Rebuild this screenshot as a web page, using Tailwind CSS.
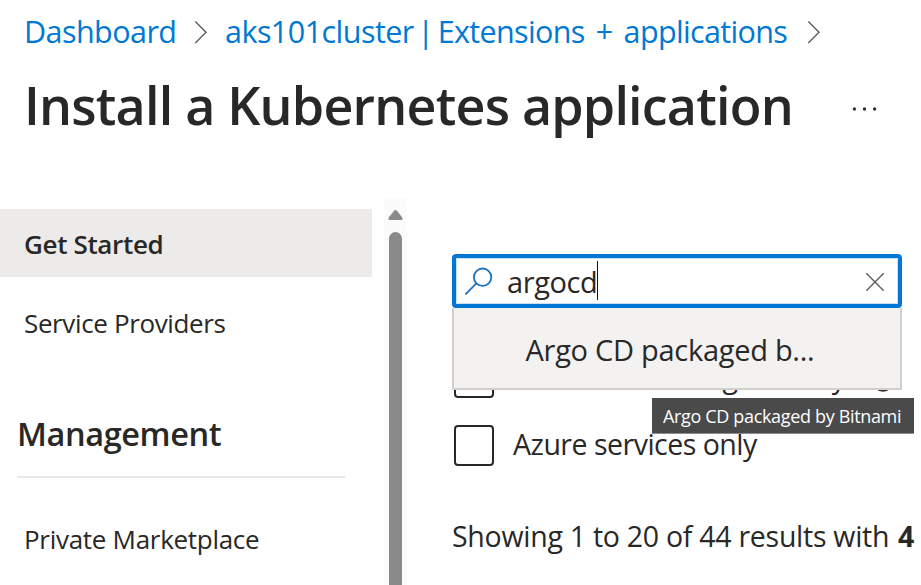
<!DOCTYPE html>
<html lang="en">
<head>
<meta charset="utf-8">
<title>Install a Kubernetes application</title>
<script src="https://cdn.jsdelivr.net/npm/@tailwindcss/browser@4"></script>
</head>
<body class="w-[921px] h-[585px] overflow-hidden bg-white text-[#292827] font-['Open_Sans','Noto_Sans',sans-serif] whitespace-nowrap flex flex-col">
  <header class="h-[198px] shrink-0 pt-[11px]">
    <nav class="flex items-center h-10 pl-6 text-[30.5px] leading-10 text-[#0078d4]">
      <a class="w-[170px] tracking-[-0.55px]">Dashboard</a>
      <svg class="w-[14px] h-6 shrink-0 mt-px" viewBox="0 0 14 24" fill="none" stroke="#605e5c" stroke-width="1.4"><path d="M1.3 1.5 12 12.3 1.3 23"/></svg>
      <a class="w-[599px] pl-[17px] tracking-[-0.545px]">aks101cluster<span class="-ml-[4px] -mr-[3px]"> | </span><span class="tracking-[-0.65px] [word-spacing:3.8px]">Extensions + applications</span></a>
      <svg class="w-[14px] h-6 shrink-0 mt-px" viewBox="0 0 14 24" fill="none" stroke="#605e5c" stroke-width="1.4"><path d="M1.3 1.5 12 12.3 1.3 23"/></svg>
    </nav>
    <div class="flex items-center mt-[19px] h-[70px] pl-6">
      <h1 class="w-[828px] text-[52px] leading-[70px] font-semibold tracking-[-0.79px]">Install a Kubernetes application</h1>
      <svg class="w-[26px] h-2 mt-[7px] shrink-0" viewBox="0 0 26 8" fill="#323130"><circle cx="2.4" cy="4" r="1.7"/><circle cx="12.5" cy="4" r="1.7"/><circle cx="22.6" cy="4" r="1.7"/></svg>
    </div>
  </header>
  <main class="flex flex-1 min-h-0">
    <aside class="w-[384px] shrink-0 pt-[11px] text-[26px]">
      <div class="w-[372px] h-[68px] pl-6 pt-px leading-[68px] bg-[#edebe9] font-semibold tracking-[-0.35px]">Get Started</div>
      <div class="mt-3 h-[68px] pl-6 leading-[68px] tracking-[-0.37px]">Service Providers</div>
      <h2 class="ml-[17px] mt-[55px] w-[328px] h-[66px] border-b-2 border-[#e9e8e7] text-[32.5px] leading-[44px] font-semibold tracking-[-0.41px]">Management</h2>
      <div class="mt-[27px] h-[68px] pl-[24px] leading-[68px] tracking-[-0.29px]">Private Marketplace</div>
    </aside>
    <div class="w-[23px] shrink-0 bg-[#fbfbfb] flex flex-col items-center pt-3">
      <svg class="w-[15px] h-[10px] shrink-0" viewBox="0 0 15 10" fill="#8a8a8a"><path d="M6.1.7Q7.5-.5 8.9.7L14.3 7.6Q15 10 13.2 10H1.8Q0 10 .7 7.6Z"/></svg>
      <div class="mt-3 w-[13px] flex-1 rounded-t-full bg-[#8a8a8a]"></div>
    </div>
    <section class="relative flex-1 min-w-0 pl-[45px] pt-14">
      <div class="relative z-10 w-[450px] h-[54px] rounded-[4px] border-4 border-[#0078d4] bg-white shadow-[inset_0_0_0_1px_#c7e0f4] flex items-center pl-[8px]">
        <svg class="w-[29px] h-[29px] shrink-0" viewBox="0 0 29 29" fill="none" stroke="#1b73c4" stroke-width="1.8"><circle cx="18.6" cy="10.2" r="8.7"/><path d="M12.4 16.4 1.4 27.4"/></svg>
        <span class="ml-[14px] w-[90px] text-[29px] leading-[40px] pt-px tracking-[-0.4px]">argocd</span>
        <span class="w-px h-[39px] bg-[#111] -mt-px"></span>
        <svg class="ml-[267px] mt-0.5 w-5 h-5 shrink-0" viewBox="0 0 20 20" fill="none" stroke="#605e5c" stroke-width="1.4"><path d="M1.3 1.3 18.7 18.7M18.7 1.3 1.3 18.7"/></svg>
      </div>
      <div class="absolute z-10 left-[45px] top-[110px] w-[450px] h-[82px] border-2 border-t-0 border-[#d2d0ce] bg-[#f3f2f1] pl-[71.5px] pt-[22px] text-[29px] leading-[40px] tracking-[-0.28px]">Argo CD packaged b...</div>
      <div class="absolute z-20 left-[245px] top-[200px] w-[262px] h-9 border-b border-[#8c8c8c] bg-[#4a4a4a] pl-[11px] text-white text-[18px] leading-[36px] tracking-[-0.34px]">Argo CD packaged by Bitnami</div>
      <div class="mt-[49px] ml-[2px] flex items-center h-[41px]">
        <span class="w-10 h-[41px] shrink-0 border-2 border-[#292827] rounded-[4px]"></span>
        <span class="ml-[19px] w-[360px] pb-[2px] text-[28.5px] leading-[40px] tracking-[-0.36px]">Azure benefit eligible only</span>
        <svg class="w-[20px] h-[20px] shrink-0 mt-[9px]" viewBox="0 0 18 18" fill="none" stroke="#323130" stroke-width="1.6"><circle cx="9" cy="9" r="8"/><path d="M9 8v5M9 4.5v2"/></svg>
      </div>
      <div class="mt-[27px] ml-[2px] flex items-center h-[41px]">
        <span class="w-10 h-[41px] shrink-0 border-2 border-[#292827] rounded-[4px]"></span>
        <span class="ml-[19px] pb-[3px] text-[28.5px] leading-[40px] tracking-[-0.5px]">Azure services only</span>
      </div>
      <div class="mt-[50px] flex text-[28.5px] leading-[40px]">
        <span class="w-[446px] tracking-[-0.27px]">Showing 1 to 20 of 44 results with</span><b>4</b>
      </div>
    </section>
  </main>
</body>
</html>
